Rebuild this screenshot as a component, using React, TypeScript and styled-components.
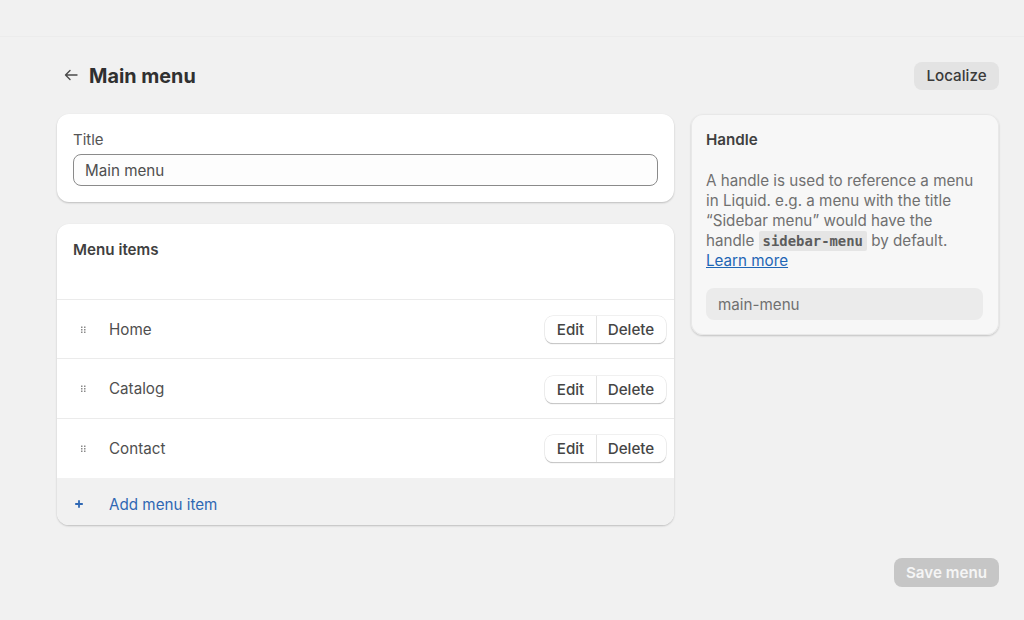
import React from "react";
import styled, { createGlobalStyle } from "styled-components";

const Global = createGlobalStyle`
  html, body { margin: 0; padding: 0; background: #f1f1f1; }
  body { font-family: Inter, "Liberation Sans", sans-serif; color: #303030; overflow: hidden; }
  * { box-sizing: border-box; }
`;

const Page = styled.div`
  width: 1024px;
  height: 620px;
  display: flex;
  flex-direction: column;
`;
const TopBar = styled.div`
  height: 37px;
  flex: none;
  border-bottom: 1px solid #ececec;
`;
const Main = styled.main`
  padding: 24px 25px 0 57px;
  display: flex;
  flex-direction: column;
`;
const Header = styled.header`
  height: 29px;
  margin-bottom: 24px;
  display: flex;
  align-items: center;
  justify-content: space-between;
`;
const TitleGroup = styled.div`
  display: flex;
  align-items: center;
  gap: 10px;
  padding-left: 6px;
`;
const BackIcon = styled.svg`
  width: 16px;
  height: 16px;
  color: #4a4a4a;
  margin-top: -2px;
`;
const PageTitle = styled.h1`
  margin: 0;
  font-size: 19.8px;
  line-height: 28px;
  font-weight: 700;
  color: #303030;
`;
const LocalizeButton = styled.button`
  height: 28px;
  width: 85px;
  border: 0;
  border-radius: 8px;
  background: #e3e3e3;
  color: #3a3a3a;
  font: 500 15.2px Inter, sans-serif;
  padding: 0;
`;
const Columns = styled.div`
  display: grid;
  grid-template-columns: 617px 308px;
  column-gap: 17px;
  align-items: start;
`;
const LeftColumn = styled.div`
  display: flex;
  flex-direction: column;
  gap: 22px;
`;
const Card = styled.section`
  background: #fff;
  border-radius: 12px;
  box-shadow: 0 1px 2px rgba(0, 0, 0, 0.22);
  overflow: hidden;
`;
const TitleCard = styled(Card)`
  height: 88px;
  padding: 16px;
`;
const Label = styled.label`
  display: block;
  font-size: 15px;
  line-height: 20px;
  color: #555;
  margin-bottom: 4px;
`;
const TitleInput = styled.div`
  height: 32px;
  border: 1px solid #8a8a8a;
  border-radius: 8px;
  background: #fdfdfd;
  padding: 0 11px;
  display: flex;
  align-items: center;
  font-size: 15.2px;
  color: #4f4f4f;
`;
const ItemsHeader = styled.div`
  height: 76px;
  padding: 15.5px 16px;
  border-bottom: 1px solid #ebebeb;
`;
const CardHeading = styled.h2`
  margin: 0;
  font-size: 15.2px;
  line-height: 20px;
  font-weight: 600;
  color: #3f3f3f;
`;
const Row = styled.div`
  height: 59.4px;
  padding: 1px 8px 0 22px;
  display: flex;
  align-items: center;
  border-bottom: 1px solid #ebebeb;
  &:nth-last-child(2) { border-bottom: 0; }
`;
const Grip = styled.svg`
  width: 8px;
  height: 8px;
  color: #8a8a8a;
  flex: none;
`;
const RowLabel = styled.span`
  margin-left: 22px;
  font-size: 15.2px;
  color: #4f4f4f;
  flex: 1;
  margin-top: -1px;
`;
const ButtonGroup = styled.div`
  display: flex;
  height: 27px;
  border-radius: 8px;
  background: #fff;
  box-shadow: 0 0 0 0.5px #e2e2e2, 0 1px 1px 0 #a8a8a8;
  overflow: hidden;
`;
const GroupButton = styled.button<{ $w: number }>`
  width: ${(p) => p.$w}px;
  border: 0;
  background: transparent;
  color: #454545;
  font: 500 15.2px Inter, sans-serif;
  padding: 0;
  & + & { border-left: 1px solid #e3e3e3; padding-right: 1px; }
`;
const AddRow = styled.div`
  height: 46.8px;
  background: #f1f1f1;
  display: flex;
  align-items: center;
  padding: 5px 0 0 16px;
  color: #2f68b4;
  font-size: 15.2px;
`;
const PlusIcon = styled.svg`
  width: 12px;
  height: 12px;
  flex: none;
`;
const AddLabel = styled.span`
  margin-left: 24px;
`;
const Aside = styled(Card)`
  height: 221px;
  background: #f7f7f7;
  padding: 16px 16px 16px 15px;
  box-shadow: 0 1px 2px rgba(0, 0, 0, 0.2), inset 0 0 0 1px #e8e8e8;
`;
const AsideText = styled.p`
  margin: 20.5px 0 0;
  font-size: 15.2px;
  line-height: 20px;
  color: #707070;
`;
const Code = styled.code`
  display: inline-block;
  font: 700 13.9px/16px "DejaVu Sans Mono", monospace;
  background: #e5e5e5;
  color: #5c5c5c;
  padding: 2px 4px;
  border-radius: 2px;
`;
const LearnMore = styled.a`
  color: #1f66b5;
  text-decoration: underline;
`;
const HandleInput = styled.div`
  margin-top: 17.5px;
  height: 32px;
  border-radius: 8px;
  background: #ebebeb;
  padding: 0 12px;
  display: flex;
  align-items: center;
  font-size: 15.2px;
  color: #707070;
`;
const Footer = styled.div`
  margin-top: 33px;
  display: flex;
  justify-content: flex-end;
`;
const SaveButton = styled.button`
  width: 105px;
  height: 29px;
  border: 0;
  border-radius: 8px;
  background: #c6c6c6;
  color: #f5f5f5;
  font: 600 15.2px Inter, sans-serif;
  padding: 0;
`;

const items = ["Home", "Catalog", "Contact"];

const GripIcon = () => (
  <Grip viewBox="0 0 8 8" fill="currentColor" aria-hidden>
    {[2, 5].map((x) =>
      [0.5, 3, 5.5].map((y) => <rect key={`${x}-${y}`} x={x} y={y} width="1.5" height="1.5" />)
    )}
  </Grip>
);

export default function App() {
  return (
    <Page>
      <Global />
      <TopBar />
      <Main>
        <Header>
          <TitleGroup>
            <BackIcon viewBox="0 0 16 16" fill="none" stroke="currentColor" strokeWidth="1.4" strokeLinecap="round" strokeLinejoin="round">
              <path d="M14 8H2.5M7 3.5 2.5 8 7 12.5" />
            </BackIcon>
            <PageTitle>Main menu</PageTitle>
          </TitleGroup>
          <LocalizeButton>Localize</LocalizeButton>
        </Header>
        <Columns>
          <LeftColumn>
            <TitleCard>
              <Label>Title</Label>
              <TitleInput>Main menu</TitleInput>
            </TitleCard>
            <Card>
              <ItemsHeader>
                <CardHeading>Menu items</CardHeading>
              </ItemsHeader>
              {items.map((item) => (
                <Row key={item}>
                  <GripIcon />
                  <RowLabel>{item}</RowLabel>
                  <ButtonGroup>
                    <GroupButton $w={51}>Edit</GroupButton>
                    <GroupButton $w={70}>Delete</GroupButton>
                  </ButtonGroup>
                </Row>
              ))}
              <AddRow>
                <PlusIcon viewBox="0 0 12 12" fill="none" stroke="currentColor" strokeWidth="1.8">
                  <path d="M6 2.2v7.6M2.2 6h7.6" />
                </PlusIcon>
                <AddLabel>Add menu item</AddLabel>
              </AddRow>
            </Card>
          </LeftColumn>
          <Aside>
            <CardHeading>Handle</CardHeading>
            <AsideText>
              A handle is used to reference a menu in Liquid. e.g. a menu with the title “Sidebar menu” would have the handle <Code>sidebar-menu</Code> by default. <LearnMore href="#">Learn more</LearnMore>
            </AsideText>
            <HandleInput>main-menu</HandleInput>
          </Aside>
        </Columns>
        <Footer>
          <SaveButton>Save menu</SaveButton>
        </Footer>
      </Main>
    </Page>
  );
}
